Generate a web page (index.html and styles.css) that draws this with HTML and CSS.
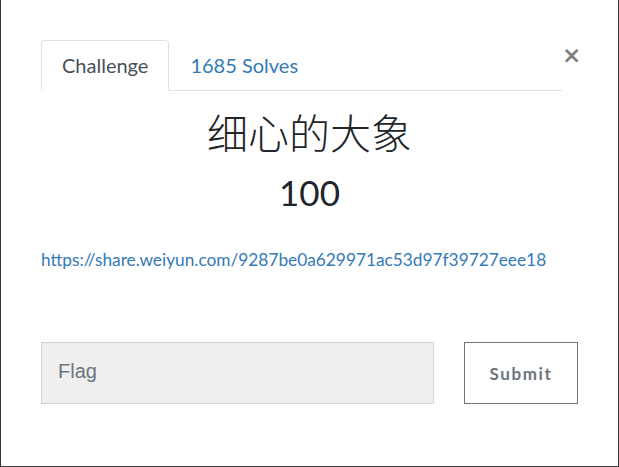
FILE: index.html
```html
<!DOCTYPE html>
<html lang="zh">
<head>
<meta charset="utf-8">
<title>Challenge</title>
<link rel="stylesheet" href="styles.css">
</head>
<body>
<div class="modal">
  <div class="modal-top">
    <ul class="tabs">
      <li class="tab active">Challenge</li>
      <li class="tab link-tab">1685 Solves</li>
    </ul>
    <button class="close" aria-label="Close">&times;</button>
  </div>
  <div class="content">
    <h2 class="title">细心的大象</h2>
    <h3 class="value">100</h3>
    <p class="desc"><a href="#">https://share.weiyun.com/9287be0a629971ac53d97f39727eee18</a></p>
    <form class="flag-form">
      <input class="flag-input" type="text" placeholder="Flag">
      <button class="submit" type="button">Submit</button>
    </form>
  </div>
</div>
</body>
</html>
```

FILE: styles.css
```css
html, body {
  margin: 0;
  padding: 0;
  height: 100%;
}
body {
  background: #3a3a3a;
  font-family: Lato, "Noto Sans CJK SC", sans-serif;
  color: #212529;
}
.modal {
  background: #fff;
  margin: 0 1px 0 1px;
  height: 466px;
  box-sizing: border-box;
  padding: 40px 40px 0 40px;
}
.modal-top {
  display: flex;
  align-items: flex-start;
}
.tabs {
  list-style: none;
  margin: 0;
  padding: 0;
  display: flex;
  flex: 1;
  border-bottom: 1px solid #dee2e6;
}
.tab {
  font-size: 20px;
  line-height: 24px;
  padding: 12px 20px 13px 20px;
  margin-bottom: -1px;
  border: 1px solid transparent;
  border-top-left-radius: 4px;
  border-top-right-radius: 4px;
}
.tab.active {
  color: #495057;
  border-color: #dee2e6 #dee2e6 #fff;
  background: #fff;
}
.link-tab {
  color: #337ab7;
}
.close {
  background: none;
  border: 0;
  padding: 0;
  margin: 6px 0 0 0;
  width: 16px;
  font-family: "DejaVu Sans", sans-serif;
  font-size: 23px;
  font-weight: bold;
  line-height: 18px;
  color: #000;
  opacity: 0.5;
}
.content {
  text-align: center;
}
.title {
  margin: 19px 0 0 0;
  font-size: 41px;
  font-weight: 300;
  line-height: 48px;
}
.value {
  margin: 13px 0 0 0;
  font-size: 35px;
  font-weight: 400;
  line-height: 42px;
}
.desc {
  margin: 34px 0 0 0;
  text-align: left;
  font-size: 17.3px;
  line-height: 25px;
}
.desc a {
  color: #337ab7;
  text-decoration: none;
}
.flag-form {
  display: flex;
  gap: 30px;
  margin-top: 70px;
}
.flag-input {
  flex: 1;
  height: 62px;
  box-sizing: border-box;
  margin: 0;
  background: #efefef;
  border: 1px solid #ced4da;
  padding: 0 16px 4px 16px;
  font-family: "Liberation Sans", Arial, sans-serif;
  font-size: 20px;
  color: #495057;
  outline: none;
}
.flag-input::placeholder {
  color: #6c757d;
}
.submit {
  width: 114px;
  height: 62px;
  box-sizing: border-box;
  background: #fff;
  border: 1px solid #6c757d;
  color: #6c757d;
  font-family: Lato, sans-serif;
  font-weight: bold;
  font-size: 17px;
  letter-spacing: 1.6px;
  padding: 0;
}
```
